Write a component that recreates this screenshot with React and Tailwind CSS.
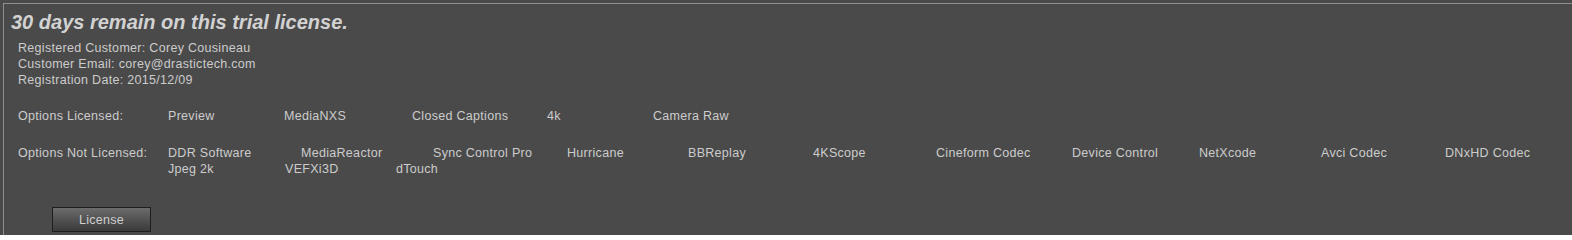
import React from 'react';

const licensed = [
    { name: "Preview", w: "w-[116px]" },
    { name: "MediaNXS", w: "w-[128px]" },
    { name: "Closed Captions", w: "w-[135px]" },
    { name: "4k", w: "w-[106px]" },
    { name: "Camera Raw", w: "w-[120px]" },
];

// first line of the options that are not licensed
const notLicensedTop = [
    { name: "DDR Software", w: "w-[133px]" },
    { name: "MediaReactor", w: "w-[132px]" },
    { name: "Sync Control Pro", w: "w-[134px]" },
    { name: "Hurricane", w: "w-[121px]" },
    { name: "BBReplay", w: "w-[125px]" },
    { name: "4KScope", w: "w-[123px]" },
    { name: "Cineform Codec", w: "w-[136px]" },
    { name: "Device Control", w: "w-[127px]" },
    { name: "NetXcode", w: "w-[122px]" },
    { name: "Avci Codec", w: "w-[124px]" },
    { name: "DNxHD Codec", w: "w-[110px]" },
];

const notLicensedBottom = [
    { name: "Jpeg 2k", w: "w-[117px]" },
    { name: "VEFXi3D", w: "w-[111px]" },
    { name: "dTouch", w: "w-[100px]" },
];

const OptionRow = ({ items }) => (
    <div className="flex">
        {items.map((item) => (
            <span key={item.name} className={`${item.w} shrink-0 whitespace-nowrap`}>
                {item.name}
            </span>
        ))}
    </div>
);

const App = () => {
    return (
        <div className="w-[1572px] h-[235px] overflow-hidden bg-[#4a4a4a] pt-[3px] pl-[3px] font-['Liberation_Sans',Arial,sans-serif]">
            <div className="h-full border-t border-l border-[#8e8e8e] text-[12.5px] tracking-[0.3px] leading-[16px] text-[#cccccc]">
                {/* Header */}
                <h1 className="mt-[6px] ml-[7px] text-[20px] leading-[24px] tracking-normal font-bold italic text-[#d2d2d2]">
                    30 days remain on this trial license.
                </h1>

                {/* Customer info */}
                <div className="mt-[6px] ml-[14px] flex flex-col">
                    <span>Registered Customer: Corey Cousineau</span>
                    <span>Customer Email: corey@drastictech.com</span>
                    <span>Registration Date: 2015/12/09</span>
                </div>

                {/* Options */}
                <div className="mt-[20px] ml-[14px] flex">
                    <span className="w-[150px] shrink-0">Options Licensed:</span>
                    <OptionRow items={licensed} />
                </div>

                <div className="mt-[21px] ml-[14px] flex">
                    <span className="w-[150px] shrink-0">Options Not Licensed:</span>
                    <div className="flex flex-col">
                        <OptionRow items={notLicensedTop} />
                        <OptionRow items={notLicensedBottom} />
                    </div>
                </div>

                <button className="mt-[30px] ml-[48px] w-[99px] h-[25px] border border-[#1e1e1e] bg-gradient-to-b from-[#6c6c6c] to-[#3a3a3a] text-[12.5px] tracking-[0.3px] text-[#cfcfcf]">
                    License
                </button>
            </div>
        </div>
    );
};

export default App;
